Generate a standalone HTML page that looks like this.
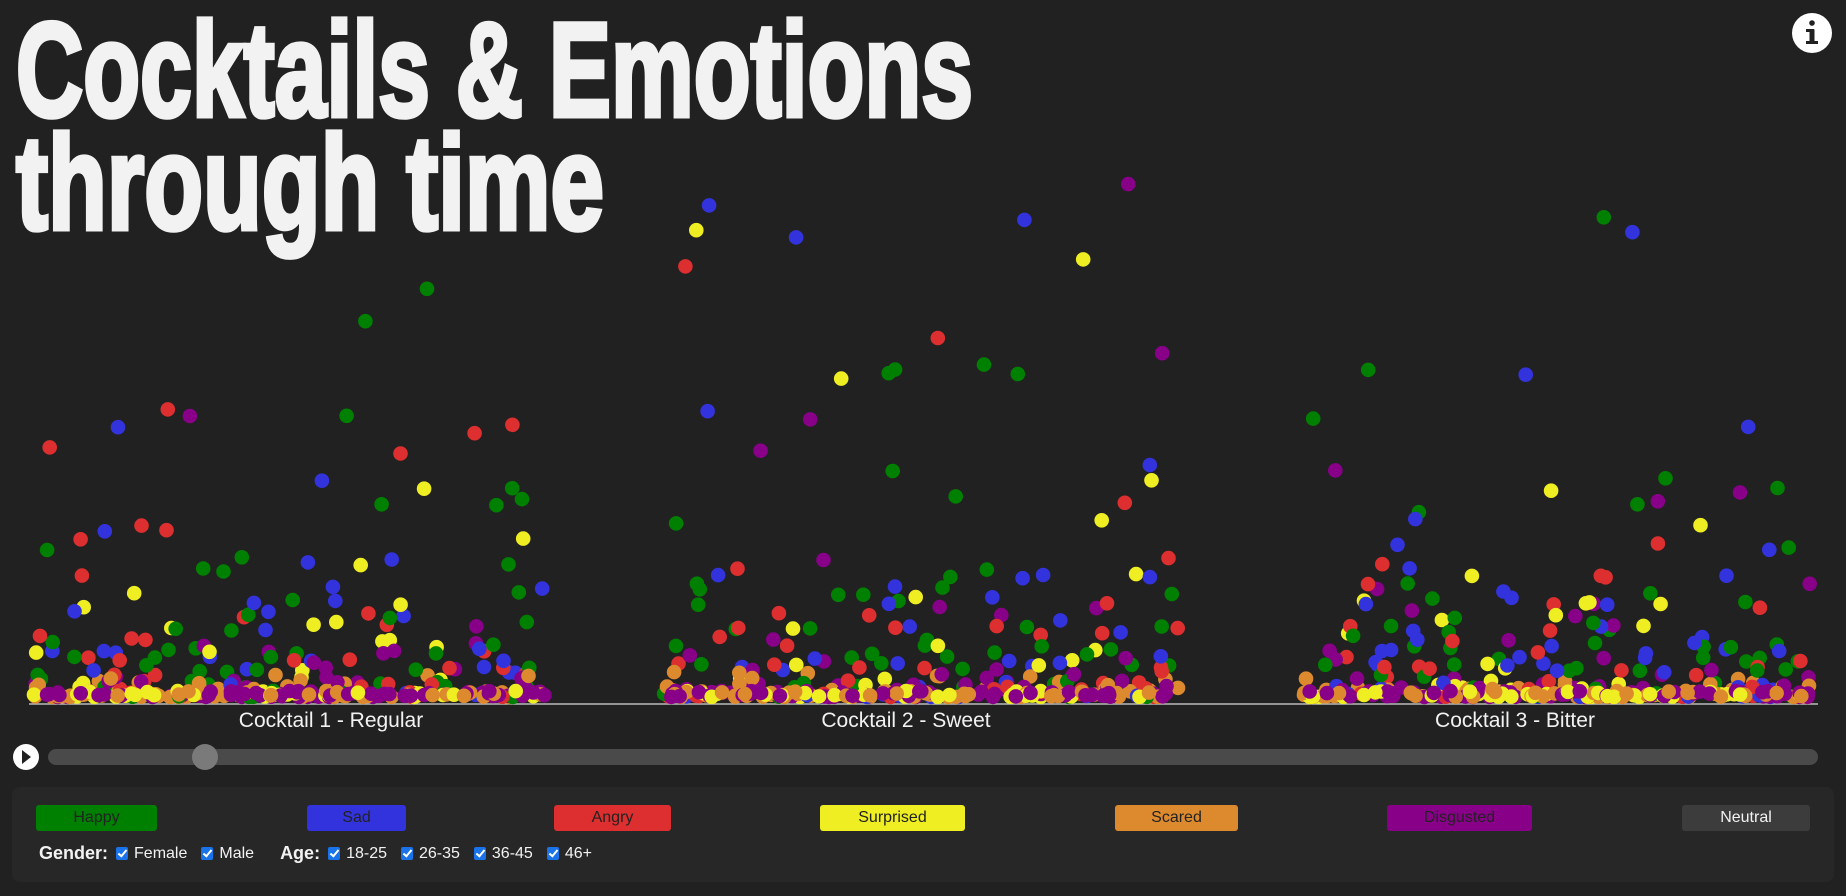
<!DOCTYPE html>
<html><head><meta charset="utf-8">
<style>
*{margin:0;padding:0;box-sizing:border-box}
body{width:1846px;height:896px;background:#212121;overflow:hidden;position:relative;font-family:"Liberation Sans",sans-serif;color:#f2f2f2}
svg{position:absolute;left:0;top:0}
.lbl{position:absolute;top:709px;font-size:21px;color:#f2f2f2;transform:translateX(-50%);white-space:nowrap}
.panel{position:absolute;left:12px;top:787px;width:1822px;height:95px;background:#272727;border-radius:8px}
.btn{position:absolute;top:18px;height:26px;border-radius:3px;font-size:16px;text-align:center;line-height:26px;color:#222}
.row{position:absolute;left:27px;top:56px;font-size:16px;display:flex;align-items:center;white-space:nowrap}
.row b{font-weight:bold;font-size:18px;margin-right:8px}
.cb{display:inline-block;width:12px;height:13px;background:#1a73e8;border-radius:2px;margin-right:6px;position:relative}
.cb:after{content:"";position:absolute;left:4px;top:1px;width:3px;height:7px;border:solid #fff;border-width:0 2px 2px 0;transform:rotate(40deg)}
.it{margin-right:14px;display:flex;align-items:center}
</style></head><body>
<svg id="s" width="1846" height="896">
<g font-family="Liberation Sans Narrow, Liberation Sans, sans-serif" font-weight="bold" font-size="134" fill="#f2f2f2" stroke="#f2f2f2" stroke-width="5" stroke-linejoin="miter">
<text x="16" y="116" textLength="957" lengthAdjust="spacingAndGlyphs">Cocktails &amp; Emotions</text>
<text x="16" y="229" textLength="588" lengthAdjust="spacingAndGlyphs">through time</text>
</g>
<line x1="29" y1="704" x2="1818" y2="704" stroke="#bbb" stroke-width="1.5"/>
<g id="dots"></g>
<circle cx="1812" cy="33" r="20" fill="#fff"/>
<circle cx="1812" cy="23" r="2.8" fill="#212121"/>
<rect x="1809.5" y="29" width="5" height="15" rx="1" fill="#212121"/>
<rect x="1806" y="29" width="6" height="3" fill="#212121"/>
<rect x="1806" y="41" width="12" height="3" fill="#212121"/>
<rect x="48" y="749" width="1770" height="16" rx="8" fill="#4a4a4a"/>
<circle cx="205" cy="757" r="13" fill="#7a7a7a"/>
<circle cx="26" cy="757" r="13" fill="#fff"/>
<path d="M22 750 L31 757 L22 764 Z" fill="#212121"/>
</svg>
<div class="lbl" style="left:331px">Cocktail 1 - Regular</div>
<div class="lbl" style="left:906px">Cocktail 2 - Sweet</div>
<div class="lbl" style="left:1515px">Cocktail 3 - Bitter</div>
<div class="panel">
<div class="btn" style="left:24px;width:121px;background:#008000">Happy</div>
<div class="btn" style="left:295px;width:99px;background:#3333dd">Sad</div>
<div class="btn" style="left:542px;width:117px;background:#dd2f2f">Angry</div>
<div class="btn" style="left:808px;width:145px;background:#eeee22">Surprised</div>
<div class="btn" style="left:1103px;width:123px;background:#dd8a2e">Scared</div>
<div class="btn" style="left:1375px;width:145px;background:#880088">Disgusted</div>
<div class="btn" style="left:1670px;width:128px;background:#3c3c3c;color:#f2f2f2">Neutral</div>
<div class="row"><b>Gender:</b><span class="it"><span class="cb"></span>Female</span><span class="it" style="margin-right:26px"><span class="cb"></span>Male</span><b>Age:</b><span class="it"><span class="cb"></span>18-25</span><span class="it"><span class="cb"></span>26-35</span><span class="it"><span class="cb"></span>36-45</span><span class="it"><span class="cb"></span>46+</span></div>
</div>
<script>
var seed=12345;function r(){seed=(seed*16807)%2147483647;return (seed-1)/2147483646;}
var high=["#008000","#3333dd","#dd2f2f","#008000","#3333dd","#dd2f2f","#008000","#3333dd","#880088","#eeee22"];
var low=["#dd8a2e","#880088","#eeee22","#dd8a2e","#880088","#3333dd","#dd2f2f","#008000","#880088","#dd8a2e"];
var segs=[[34,548],[664,1178],[1304,1812]];
var g=document.getElementById("dots"),h="";
segs.forEach(function(s){
 for(var i=0;i<260;i++){
  var x=s[0]+r()*(s[1]-s[0]);
  var e=-Math.log(1-r()*0.999);
  var up=e*e*28;
  if(up>560)up=560*r();
  var y=697-up;
  var c=up<25?low[Math.floor(r()*low.length)]:high[Math.floor(r()*high.length)];
  h+='<circle cx="'+x.toFixed(1)+'" cy="'+y.toFixed(1)+'" r="7.3" fill="'+c+'"/>';
 }
 for(var i=0;i<90;i++){
  var x=s[0]+r()*(s[1]-s[0]);
  var c=["#880088","#dd8a2e","#eeee22","#880088"][Math.floor(r()*4)];
  h+='<circle cx="'+x.toFixed(1)+'" cy="'+(697-r()*6).toFixed(1)+'" r="7.3" fill="'+c+'"/>';
 }
});
g.innerHTML=h;
</script>
</body></html>
